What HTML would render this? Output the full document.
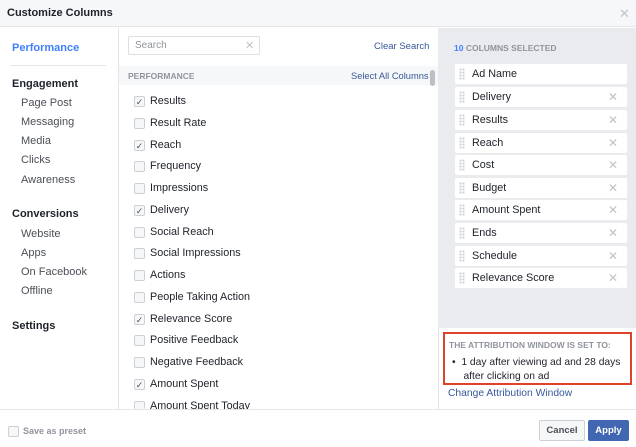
<!DOCTYPE html>
<html><head><style>
*{margin:0;padding:0;box-sizing:border-box}
body{width:636px;height:447px;overflow:hidden;font-family:"Liberation Sans",Helvetica,sans-serif;background:#fff;position:relative;color:#1d2129}
.a{position:absolute;white-space:nowrap}
.hdr{left:0;top:0;width:636px;height:27px;background:#f6f7f9;border-bottom:1px solid #e5e5e5}
.nav{font-size:11px;color:#4b4f56}
.navb{font-size:11px;font-weight:bold;color:#1d2129}
.it{font-size:10.8px;color:#1d2129;left:150px}
.cb{left:134px;width:11px;height:11px;border:1px solid #ccd0d5;border-radius:2px;background:#f6f7f9}
.ck{font-size:9px;color:#4b4f56;line-height:11px;text-align:center}
.box{left:455px;width:172px;height:20px;background:#fff;border-radius:2px;font-size:10.8px;line-height:20px}
.box .d{position:absolute;left:4px;top:4px;width:6px;height:12px;background-image:radial-gradient(circle,#ccd0d5 1px,transparent 1.2px);background-size:3px 3px}
.box .t{position:absolute;left:17px}
.box .x{position:absolute;right:9px;color:#bec3c9;font-size:12px}
</style></head><body>
<div class="a hdr"></div>
<div class="a" style="left:7px;top:7px;font-size:11px;font-weight:bold">Customize Columns</div>
<div class="a" style="left:619px;top:6px;font-size:13px;color:#bec3c9">✕</div>
<div class="a" style="left:118px;top:28px;width:1px;height:381px;background:#e5e5e5"></div>
<div class="a" style="left:438px;top:28px;width:198px;height:300px;background:#e9ebee"></div>
<div class="a" style="left:438px;top:328px;width:1px;height:81px;background:#e5e5e5"></div>
<div class="a" style="left:0;top:409px;width:636px;height:1px;background:#e5e5e5"></div>

<div class="a" style="left:12px;top:42px;font-size:11px;font-weight:bold;color:#4080ff">Performance</div>
<div class="a" style="left:10px;top:65px;width:96px;height:1px;background:#e5e5e5"></div>
<div class="a navb" style="left:12px;top:78px">Engagement</div>
<div class="a nav" style="left:21px;top:97px">Page Post</div>
<div class="a nav" style="left:21px;top:116px">Messaging</div>
<div class="a nav" style="left:21px;top:135px">Media</div>
<div class="a nav" style="left:21px;top:154px">Clicks</div>
<div class="a nav" style="left:21px;top:174px">Awareness</div>
<div class="a navb" style="left:12px;top:208px">Conversions</div>
<div class="a nav" style="left:21px;top:228px">Website</div>
<div class="a nav" style="left:21px;top:247px">Apps</div>
<div class="a nav" style="left:21px;top:266px">On Facebook</div>
<div class="a nav" style="left:21px;top:285px">Offline</div>
<div class="a navb" style="left:12px;top:320px">Settings</div>

<div class="a" style="left:128px;top:36px;width:132px;height:19px;border:1px solid #dddfe2;border-radius:2px"></div>
<div class="a" style="left:135px;top:40px;font-size:10px;color:#90949c">Search</div>
<div class="a" style="left:245px;top:39px;font-size:11px;color:#bec3c9">✕</div>
<div class="a" style="left:374px;top:41px;font-size:9.5px;color:#365899">Clear Search</div>
<div class="a" style="left:119px;top:66px;width:319px;height:19px;background:#f6f7f9"></div>
<div class="a" style="left:128px;top:71px;font-size:8.5px;font-weight:bold;color:#90949c">PERFORMANCE</div>
<div class="a" style="left:351px;top:71px;font-size:9.3px;color:#365899">Select All Columns</div>
<div class="a" style="left:430px;top:70px;width:5px;height:16px;border-radius:3px;background:#bcc0c4"></div>

<div class="a cb ck" style="top:96px">✓</div><div class="a it" style="top:95px">Results</div>
<div class="a cb" style="top:118px"></div><div class="a it" style="top:117px">Result Rate</div>
<div class="a cb ck" style="top:140px">✓</div><div class="a it" style="top:139px">Reach</div>
<div class="a cb" style="top:161px"></div><div class="a it" style="top:160px">Frequency</div>
<div class="a cb" style="top:183px"></div><div class="a it" style="top:182px">Impressions</div>
<div class="a cb ck" style="top:205px">✓</div><div class="a it" style="top:204px">Delivery</div>
<div class="a cb" style="top:227px"></div><div class="a it" style="top:226px">Social Reach</div>
<div class="a cb" style="top:248px"></div><div class="a it" style="top:247px">Social Impressions</div>
<div class="a cb" style="top:270px"></div><div class="a it" style="top:269px">Actions</div>
<div class="a cb" style="top:292px"></div><div class="a it" style="top:291px">People Taking Action</div>
<div class="a cb ck" style="top:314px">✓</div><div class="a it" style="top:313px">Relevance Score</div>
<div class="a cb" style="top:335px"></div><div class="a it" style="top:334px">Positive Feedback</div>
<div class="a cb" style="top:357px"></div><div class="a it" style="top:356px">Negative Feedback</div>
<div class="a cb ck" style="top:379px">✓</div><div class="a it" style="top:378px">Amount Spent</div>
<div class="a cb" style="top:401px;height:8px;border-bottom:none"></div>
<div class="a" style="left:150px;top:400px;height:9px;overflow:hidden;font-size:10.8px;line-height:13px">Amount Spent Today</div>

<div class="a" style="left:454px;top:43px;font-size:8.5px;font-weight:bold;color:#90949c"><span style="color:#4080ff">10</span> COLUMNS SELECTED</div>
<div class="a box" style="top:64px"><div class="d"></div><span class="t">Ad Name</span></div>
<div class="a box" style="top:87px"><div class="d"></div><span class="t">Delivery</span><span class="x">✕</span></div>
<div class="a box" style="top:110px"><div class="d"></div><span class="t">Results</span><span class="x">✕</span></div>
<div class="a box" style="top:133px"><div class="d"></div><span class="t">Reach</span><span class="x">✕</span></div>
<div class="a box" style="top:155px"><div class="d"></div><span class="t">Cost</span><span class="x">✕</span></div>
<div class="a box" style="top:178px"><div class="d"></div><span class="t">Budget</span><span class="x">✕</span></div>
<div class="a box" style="top:200px"><div class="d"></div><span class="t">Amount Spent</span><span class="x">✕</span></div>
<div class="a box" style="top:223px"><div class="d"></div><span class="t">Ends</span><span class="x">✕</span></div>
<div class="a box" style="top:246px"><div class="d"></div><span class="t">Schedule</span><span class="x">✕</span></div>
<div class="a box" style="top:268px"><div class="d"></div><span class="t">Relevance Score</span><span class="x">✕</span></div>

<div class="a" style="left:443px;top:332px;width:189px;height:53px;border:2px solid #e0412b"></div>
<div class="a" style="left:449px;top:340px;font-size:8.5px;font-weight:bold;color:#90949c">THE ATTRIBUTION WINDOW IS SET TO:</div>
<div class="a" style="left:452px;top:356px;font-size:10.3px;line-height:14px">•&nbsp; 1 day after viewing ad and 28 days<br>&nbsp;&nbsp;&nbsp;&nbsp;after clicking on ad</div>
<div class="a" style="left:448px;top:388px;font-size:10.3px;color:#365899">Change Attribution Window</div>

<div class="a" style="left:8px;top:426px;width:11px;height:11px;border:1px solid #ccd0d5;border-radius:2px;background:#f6f7f9"></div>
<div class="a" style="left:23px;top:426px;font-size:9px;font-weight:bold;color:#90949c">Save as preset</div>
<div class="a" style="left:539px;top:420px;width:46px;height:21px;border:1px solid #ccd0d5;border-radius:2px;background:#f6f7f9;font-size:9.5px;font-weight:bold;color:#4b4f56;text-align:center;line-height:19px">Cancel</div>
<div class="a" style="left:588px;top:420px;width:41px;height:21px;border:1px solid #4267b2;border-radius:2px;background:#4267b2;font-size:9.5px;font-weight:bold;color:#fff;text-align:center;line-height:19px">Apply</div>
</body></html>
